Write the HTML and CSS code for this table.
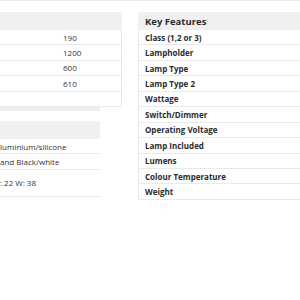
FILE: index.html
```html
<!DOCTYPE html>
<html>
<head>
<meta charset="utf-8">
<link rel="stylesheet" href="styles.css">
</head>
<body>
<div class="topline"></div>
<main class="layout">
  <section class="left">
    <div class="spec">
      <div class="spec-head"></div>
      <div class="spec-row"><span class="label"></span><span class="value">190</span></div>
      <div class="spec-row"><span class="label"></span><span class="value">1200</span></div>
      <div class="spec-row"><span class="label"></span><span class="value">600</span></div>
      <div class="spec-row"><span class="label"></span><span class="value">610</span></div>
      <div class="spec-row"><span class="label"></span><span class="value"></span></div>
    </div>
    <div class="strip"></div>
    <div class="materials">
      <div class="mat-head"></div>
      <div class="mat-row">Aluminium/silicone</div>
      <div class="mat-row flush">and Black/white</div>
      <div class="mat-row tall">H: 22 W: 38</div>
    </div>
  </section>
  <section class="right">
    <div class="features">
      <div class="feat-head">Key Features</div>
      <div class="feat-row">Class (1,2 or 3)</div>
      <div class="feat-row">Lampholder</div>
      <div class="feat-row">Lamp Type</div>
      <div class="feat-row">Lamp Type 2</div>
      <div class="feat-row">Wattage</div>
      <div class="feat-row">Switch/Dimmer</div>
      <div class="feat-row">Operating Voltage</div>
      <div class="feat-row">Lamp Included</div>
      <div class="feat-row">Lumens</div>
      <div class="feat-row">Colour Temperature</div>
      <div class="feat-row">Weight</div>
    </div>
    <div class="faint">5.0 kg</div>
  </section>
</main>
</body>
</html>
```
FILE: styles.css
```css
html, body {
  margin: 0;
  padding: 0;
  background: #fff;
  overflow: hidden;
  width: 300px;
  height: 300px;
}
body {
  font-family: "Open Sans", "DejaVu Sans", sans-serif;
  font-size: 8px;
  color: #333;
}
.topline {
  height: 1px;
  background: #ececec;
}
.layout {
  display: flex;
  padding-top: 11px;
  gap: 16px;
}
.left {
  width: 122px;
  flex: none;
}
.spec {
  margin-left: -60px;
  width: 182px;
  box-sizing: border-box;
}
.spec-head {
  height: 18px;
  background: #f0f0f0;
}
.spec-row {
  display: flex;
  height: 15.4px;
  box-sizing: border-box;
  border-bottom: 1px solid #e9e9e9;
  border-right: 1px solid #e9e9e9;
  align-items: center;
}
.label {
  width: 116px;
  flex: none;
}
.value {
  padding-left: 7px;
}
.strip {
  width: 100px;
  height: 4px;
  background: #efefef;
}
.materials {
  margin-top: 10px;
  margin-left: -11px;
  width: 111px;
}
.mat-head {
  height: 18px;
  background: #f0f0f0;
}
.mat-row {
  height: 15.5px;
  box-sizing: border-box;
  border-bottom: 1px solid #e9e9e9;
  padding-left: 6px;
  display: flex;
  align-items: center;
  white-space: nowrap;
}
.mat-row.flush {
  padding-left: 11px;
}
.mat-row.tall {
  height: 27px;
  padding-left: 5px;
}
.right {
  flex: none;
  width: 200px;
}
.features {
  width: 200px;
}
.feat-head {
  height: 18px;
  background: #f0f0f0;
  font-weight: 700;
  font-size: 9.5px;
  padding-left: 7px;
  display: flex;
  align-items: center;
  color: #2b2b2b;
}
.feat-row {
  height: 15.45px;
  box-sizing: border-box;
  border-bottom: 1px solid #e9e9e9;
  border-left: 1px solid #e9e9e9;
  padding-left: 6px;
  display: flex;
  align-items: center;
  font-weight: 700;
  color: #2b2b2b;
}
.faint {
  padding-left: 10px;
  font-size: 7px;
  color: #f6f6f6;
}
```
